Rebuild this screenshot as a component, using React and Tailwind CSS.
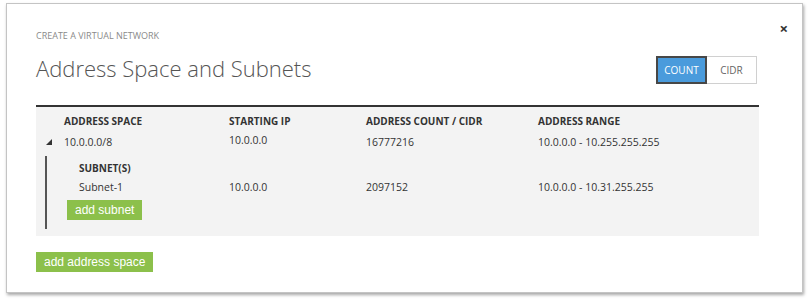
import React from "react";

const cols = "grid grid-cols-[165px_137px_172px_1fr]";

function Triangle() {
  return (
    <svg width="6" height="6" viewBox="0 0 6 6" className="block">
      <polygon points="6,0 6,6 0,6" fill="#333" />
    </svg>
  );
}

export default function App() {
  return (
    <div className="w-[809px] h-[300px] bg-white pt-[3px] pl-[6px] font-['Open_Sans',sans-serif]">
      <div className="relative w-[797px] h-[290px] border border-[#c4c4c4] shadow-[1px_2px_3px_rgba(0,0,0,0.35)] pl-[29px] pr-[43px] pt-[26px]">
        <button className="absolute top-[17px] right-[14px] text-[15px] leading-none font-bold text-[#333]">
          ×
        </button>
        <div className="text-[9px] leading-[12px] text-[#8a8a8a] uppercase">Create a virtual network</div>
        <div className="flex items-start justify-between mt-[11px]">
          <h1 className="text-[22px] leading-[30px] font-light text-[#555]">Address Space and Subnets</h1>
          <div className="flex mt-[3px] mr-[2px]">
            <button className="w-[51px] h-[28px] bg-[#4a9bdc] border-2 border-[#474747] text-white text-[10px]">
              COUNT
            </button>
            <button className="w-[50px] h-[28px] bg-white border border-[#d0d0d0] border-l-0 text-[#666] text-[10px]">
              CIDR
            </button>
          </div>
        </div>
        <div className="mt-[21px] border-t-2 border-[#333] bg-[#f3f3f3] h-[131px] text-[10.5px] text-[#333] pt-[7px]">
          <div className={`${cols} pl-[28px] font-bold text-[10px] leading-[14px]`}>
            <div>ADDRESS SPACE</div>
            <div>STARTING IP</div>
            <div>ADDRESS COUNT / CIDR</div>
            <div>ADDRESS RANGE</div>
          </div>
          <div className="grid grid-cols-[193px_137px_172px_1fr] leading-[14px] mt-[7px]">
            <div className="flex items-center">
              <div className="w-[28px] pl-[10px]"><Triangle /></div>
              <div>10.0.0.0/8</div>
            </div>
            <div className="-mt-[2px]">10.0.0.0</div>
            <div>16777216</div>
            <div>10.0.0.0 - 10.255.255.255</div>
          </div>
          <div className="ml-[9px] mt-[7px] border-l-2 border-[#555] h-[73px] pt-[5px]">
            <div className="leading-[14px] pl-[32px] font-bold text-[10px]">SUBNET(S)</div>
            <div className="grid grid-cols-[182px_137px_172px_1fr] leading-[14px] mt-[5px]">
              <div className="pl-[32px]">Subnet-1</div>
              <div>10.0.0.0</div>
              <div>2097152</div>
              <div>10.0.0.0 - 10.31.255.255</div>
            </div>
            <button className="ml-[20px] mt-[6px] h-[20px] px-[8px] bg-[#8cc04b] text-white text-[12px] font-['Liberation_Sans',Arial,sans-serif]">
              add subnet
            </button>
          </div>
        </div>
        <button className="mt-[16px] h-[20px] px-[8px] bg-[#8cc04b] text-white text-[12px] font-['Liberation_Sans',Arial,sans-serif]">
          add address space
        </button>
      </div>
    </div>
  );
}
